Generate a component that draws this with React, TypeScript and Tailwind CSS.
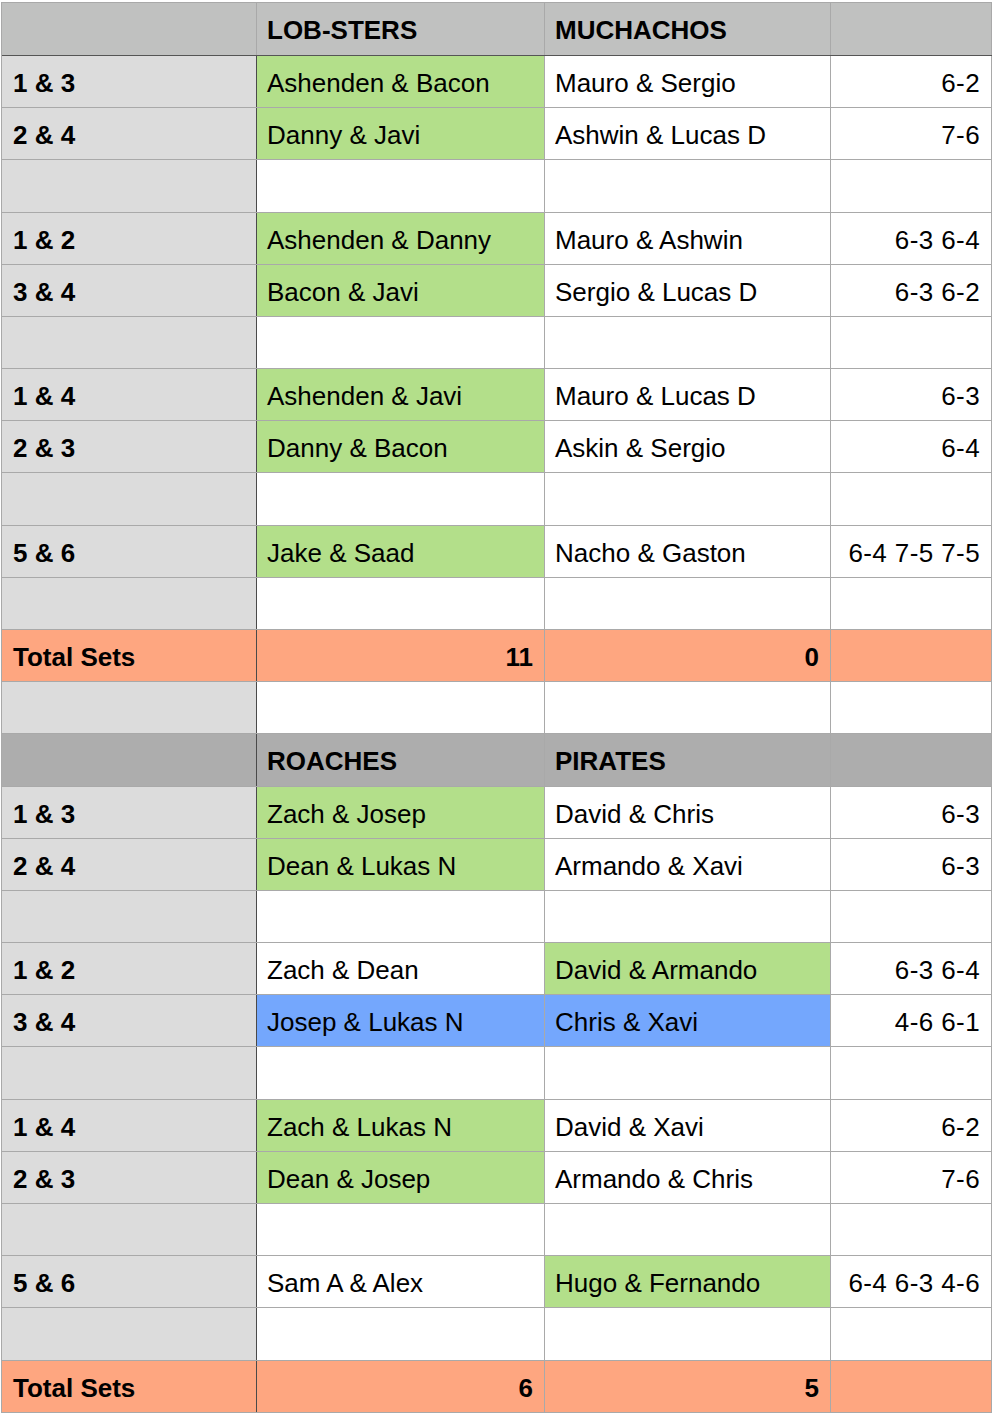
import React from "react";

type Cell = { t?: string; bg?: string; bold?: boolean; right?: boolean };
type Row = { kind: "head1" | "head2" | "data" | "blank" | "total"; cells: Cell[]; h: 52 | 53 };

const G = "bg-[#b3df8a]";
const B = "bg-[#74a7fd]";

function data(label: string, a: string, b: string, score: string, aBg?: string, bBg?: string, h: 52 | 53 = 52): Row {
  return {
    kind: "data",
    h,
    cells: [
      { t: label, bold: true },
      { t: a, bg: aBg },
      { t: b, bg: bBg },
      { t: score, right: true },
    ],
  };
}
const blank = (h: 52 | 53 = 52): Row => ({ kind: "blank", h, cells: [{}, {}, {}, {}] });
const head = (kind: "head1" | "head2", a: string, b: string, h: 52 | 53): Row => ({
  kind,
  h,
  cells: [{}, { t: a, bold: true }, { t: b, bold: true }, {}],
});
const total = (a: string, b: string, h: 52 | 53): Row => ({
  kind: "total",
  h,
  cells: [{ t: "Total Sets", bold: true }, { t: a, bold: true, right: true }, { t: b, bold: true, right: true }, {}],
});

const rows: Row[] = [
  head("head1", "LOB-STERS", "MUCHACHOS", 53),
  data("1 & 3", "Ashenden & Bacon", "Mauro & Sergio", "6-2", G),
  data("2 & 4", "Danny & Javi", "Ashwin & Lucas D", "7-6", G),
  blank(53),
  data("1 & 2", "Ashenden & Danny", "Mauro & Ashwin", "6-3 6-4", G),
  data("3 & 4", "Bacon & Javi", "Sergio & Lucas D", "6-3 6-2", G),
  blank(),
  data("1 & 4", "Ashenden & Javi", "Mauro & Lucas D", "6-3", G),
  data("2 & 3", "Danny & Bacon", "Askin & Sergio", "6-4", G),
  blank(53),
  data("5 & 6", "Jake & Saad", "Nacho & Gaston", "6-4 7-5 7-5", G),
  blank(),
  total("11", "0", 52),
  blank(),
  head("head2", "ROACHES", "PIRATES", 53),
  data("1 & 3", "Zach & Josep", "David & Chris", "6-3", G),
  data("2 & 4", "Dean & Lukas N", "Armando & Xavi", "6-3", G),
  blank(),
  data("1 & 2", "Zach & Dean", "David & Armando", "6-3 6-4", undefined, G),
  data("3 & 4", "Josep & Lukas N", "Chris & Xavi", "4-6 6-1", B, B),
  blank(53),
  data("1 & 4", "Zach & Lukas N", "David & Xavi", "6-2", G),
  data("2 & 3", "Dean & Josep", "Armando & Chris", "7-6", G),
  blank(),
  data("5 & 6", "Sam A & Alex", "Hugo & Fernando", "6-4 6-3 4-6", undefined, G),
  blank(53),
  total("6", "5", 52),
];

const widths = ["w-[255px]", "w-[288px]", "w-[286px]", "w-[161px]"];

export default function App() {
  return (
    <div className="pl-[1px] pt-[2px] bg-white min-h-[1417px]" style={{ fontFamily: '"Liberation Sans", Arial, sans-serif' }}>
      <div className="w-[991px] border-l border-t border-[#a9a9a9]">
        {rows.map((r, i) => {
          const rowBorder = r.kind === "head1" ? "border-[#555555]" : "border-[#a9a9a9]";
          const heightCls = r.h === 53 ? "h-[53px]" : "h-[52px]";
          return (
            <div key={i} className={`flex ${heightCls} border-b ${rowBorder}`}>
              {r.cells.map((c, j) => {
                let bg = "bg-white";
                if (r.kind === "head1") bg = "bg-[#c0c1c0]";
                else if (r.kind === "head2") bg = "bg-[#adadad]";
                else if (r.kind === "total") bg = "bg-[#fea680]";
                else if (j === 0) bg = "bg-[#dcdcdc]";
                else if (c.bg) bg = c.bg;
                const rightBorder =
                  j === 0 && r.kind !== "head1" ? "border-[#4a4a4a]" : "border-[#a9a9a9]";
                const isScore = j === 3 && c.right;
                return (
                  <div
                    key={j}
                    className={`${widths[j]} ${bg} border-r ${rightBorder} flex items-center pt-[2px] ${
                      c.right ? "justify-end pr-[11px]" : j === 0 ? "pl-[11px]" : "pl-[10px]"
                    } text-[26px] leading-none text-black ${c.bold ? "font-bold text-[25px]" : ""} ${
                      isScore ? "tracking-[0.4px]" : ""
                    } whitespace-nowrap overflow-hidden`}
                  >
                    {c.t ?? ""}
                  </div>
                );
              })}
            </div>
          );
        })}
      </div>
    </div>
  );
}
